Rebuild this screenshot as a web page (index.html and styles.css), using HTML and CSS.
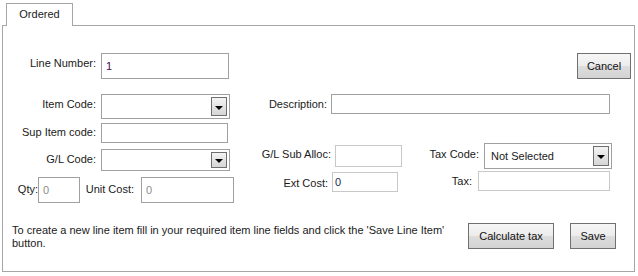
FILE: index.html
```html
<!DOCTYPE html>
<html>
<head>
<meta charset="utf-8">
<link rel="stylesheet" href="styles.css">
</head>
<body>
<div class="tabs">
  <div class="tab-gap"></div>
  <div class="tab">Ordered</div>
  <div class="tab-fill"></div>
</div>
<div class="panel">
  <div class="row row-a">
    <span class="lbl lbl-main m4">Line Number:</span>
    <div class="box box-line val-purple">1</div>
    <div class="spacer"></div>
    <div class="btn btn-cancel">Cancel</div>
  </div>
  <div class="row row-b">
    <span class="lbl lbl-main m4">Item Code:</span>
    <div class="select sel-item"><span></span><span class="arrow"><i></i></span></div>
    <span class="lbl lbl-desc m4">Description:</span>
    <div class="box box-desc"></div>
  </div>
  <div class="row row-c">
    <span class="lbl lbl-main m3">Sup Item code:</span>
    <div class="box box-sup"></div>
  </div>
  <div class="row row-d">
    <span class="lbl lbl-main m10">G/L Code:</span>
    <div class="select sel-gl"><span></span><span class="arrow"><i></i></span></div>
    <span class="lbl lbl-sub m5">G/L Sub Alloc:</span>
    <div class="box light box-sub"></div>
    <span class="lbl lbl-taxcode m5">Tax Code:</span>
    <div class="select sel-tax"><span class="sel-text">Not Selected</span><span class="arrow"><i></i></span></div>
  </div>
  <div class="row row-e">
    <span class="lbl lbl-qty m12">Qty:</span>
    <div class="box box-qty val-gray">0</div>
    <span class="lbl lbl-unit m12">Unit Cost:</span>
    <div class="box box-unit val-gray">0</div>
    <span class="lbl lbl-ext m6">Ext Cost:</span>
    <div class="box light box-ext val-navy">0</div>
    <span class="lbl lbl-tax m4">Tax:</span>
    <div class="box light box-tax"></div>
  </div>
  <div class="row row-f">
    <p class="note">To create a new line item fill in your required item line fields and click the 'Save Line Item'<br>button.</p>
    <div class="btn btn-calc">Calculate tax</div>
    <div class="btn btn-save">Save</div>
  </div>
</div>
</body>
</html>
```

FILE: styles.css
```css
html, body {
  margin: 0;
  padding: 0;
  background: #ffffff;
}
body {
  font-family: "Liberation Sans", Arial, sans-serif;
  font-size: 11px;
  color: #1a1a1a;
}

/* tabs */
.tabs {
  display: flex;
  align-items: flex-end;
  width: 635px;
  padding-top: 3px;
  box-sizing: border-box;
}
.tab-gap {
  margin-left: 2px;
  width: 4px;
  height: 22px;
  border-bottom: 1px solid #a6a6a6;
}
.tab {
  width: 65px;
  height: 22px;
  border: 1px solid #a6a6a6;
  border-bottom: none;
  text-align: center;
  line-height: 21px;
  color: #1a1a1a;
  background: #fff;
}
.tab-fill {
  flex: 1;
  height: 22px;
  border-bottom: 1px solid #a6a6a6;
}

/* panel */
.panel {
  margin-left: 2px;
  width: 633px;
  height: 246px;
  box-sizing: border-box;
  padding-top: 27px;
  border: 1px solid #a6a6a6;
  border-top: none;
}
.row {
  display: flex;
  align-items: flex-start;
}
.row-a { height: 25px; }
.row-b { margin-top: 16px; height: 25px; }
.row-c { margin-top: 4px; height: 20px; }
.row-d { margin-top: 0; height: 28px; }
.row-e { margin-top: 0; height: 32px; }
.row-f { margin-top: 20px; }

.lbl {
  display: block;
  line-height: 13px;
  text-align: right;
  white-space: nowrap;
  flex: none;
}
.m3 { margin-top: 3px; }
.m4 { margin-top: 4px; }
.m5 { margin-top: 5px; }
.m6 { margin-top: 6px; }
.m10 { margin-top: 10px; }
.m12 { margin-top: 12px; }

.lbl-main { width: 93px; margin-right: 5px; }
.lbl-desc { width: 97px; margin-right: 4px; }
.lbl-sub { width: 101px; margin-right: 4px; }
.lbl-taxcode { width: 77px; margin-right: 5px; }
.lbl-qty { width: 35px; margin-right: 0; }
.lbl-unit { width: 54px; margin-right: 7px; }
.lbl-ext { width: 94px; margin-right: 4px; }
.lbl-tax { width: 74px; margin-right: 6px; }

.spacer { flex: 1; }

/* text boxes */
.box {
  flex: none;
  box-sizing: border-box;
  border: 1px solid #a0a0a0;
  background: #fff;
  padding-left: 4px;
  font-size: 11px;
  display: flex;
  align-items: center;
}
.box.light { border-color: #c8c8c8; }
.box-line { width: 128px; height: 26px; }
.box-desc { width: 279px; height: 20px; }
.box-sup { width: 127px; height: 20px; }
.box-sub { width: 67px; height: 22px; margin-top: 2px; }
.box-qty { width: 42px; height: 26px; margin-top: 6px; }
.box-unit { width: 93px; height: 26px; margin-top: 6px; }
.box-ext { width: 66px; height: 20px; margin-top: 1px; padding-left: 2px; }
.box-tax { width: 132px; height: 20px; }

.val-purple { color: #4a0a4a; }
.val-gray { color: #8c8c8c; }
.val-navy { color: #1c2e55; }

/* selects */
.select {
  flex: none;
  box-sizing: border-box;
  border: 1px solid #a0a0a0;
  background: #fff;
  display: flex;
  justify-content: space-between;
  align-items: stretch;
  padding: 2px;
}
.sel-item { width: 129px; height: 25px; }
.sel-gl { width: 129px; height: 22px; margin-top: 6px; }
.sel-tax { width: 128px; height: 26px; }
.sel-text {
  font-size: 11px;
  color: #1a1a1a;
  padding-left: 4px;
  display: flex;
  align-items: center;
}
.arrow {
  width: 16px;
  box-sizing: border-box;
  border: 1px solid #6e6e6e;
  background: linear-gradient(#f4f4f4, #e4e4e4 50%, #d6d6d6);
  display: flex;
  align-items: center;
  justify-content: center;
}
.arrow i {
  display: block;
  width: 0;
  height: 0;
  margin-top: 2px;
  border-left: 4px solid transparent;
  border-right: 4px solid transparent;
  border-top: 4px solid #000;
}

/* buttons */
.btn {
  flex: none;
  box-sizing: border-box;
  height: 26px;
  border: 1px solid #707070;
  background: linear-gradient(#f6f6f6, #ececec 50%, #dddddd 51%, #d3d3d3);
  color: #111;
  font-size: 11px;
  display: flex;
  align-items: center;
  justify-content: center;
}
.btn-cancel { width: 54px; margin-right: 3px; }
.btn-calc { width: 86px; margin-left: 0; }
.btn-save { width: 46px; margin-left: 16px; }

.note {
  margin: 1px 0 0 9px;
  width: 456px;
  line-height: 13px;
  flex: none;
}
```
